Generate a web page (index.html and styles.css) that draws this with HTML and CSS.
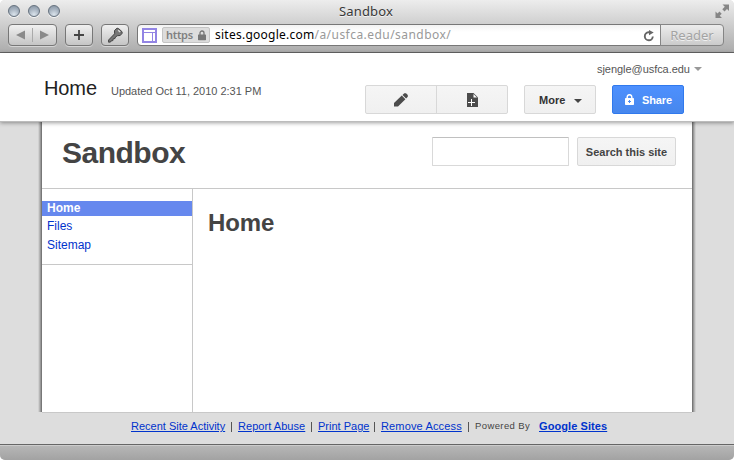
FILE: index.html
```html
<!DOCTYPE html>
<html lang="en">
<head>
<meta charset="utf-8">
<title>Sandbox</title>
<link rel="stylesheet" href="styles.css">
</head>
<body>
<div class="window">
  <div class="chrome">
    <div class="titlebar">
      <div class="lights"><i></i><i></i><i></i></div>
      <span class="title">Sandbox</span>
      <svg class="expand" width="15" height="15" viewBox="0 0 15 15"><path d="M7.500 .5h6.500v6.500l-2-2-2.500 2.500-2.200-2.200 2.500-2.500zM.500 7.500l2 2 2-2 2.200 2.200-2 2 2.300 2.300h-6.500z" fill="#858585"/></svg>
    </div>
    <div class="toolbar">
      <div class="tool nav">
        <svg width="47" height="20" viewBox="0 0 47 20"><path d="M16 5.500v9l-9-4.500zM31 5.500v9l9-4.500z" fill="#8a8a8a"/><path d="M23.500 3v14" stroke="#aaa"/></svg>
      </div>
      <div class="tool plus">
        <svg width="26" height="20" viewBox="0 0 26 20"><path d="M13 5v10M8 10h10" stroke="#444" stroke-width="1.800"/></svg>
      </div>
      <div class="tool key">
        <svg width="26" height="20" viewBox="0 0 26 20"><path d="M12.500 5.500L15 3.200l1.500.3 3.500 3.200.2 1.500-2 2.300-2.700.2-2 1.200-.5 1.600-1.800.3-.3 1.800-1.700.2-.6 1.200-2 .2V15l6-6.200z" fill="#777" stroke="#444"/><path d="M16.200 5.200l2 1.800" stroke="#ddd" stroke-width="1.300"/></svg>
      </div>
      <div class="address">
        <svg class="favicon" width="15" height="15" viewBox="0 0 15 15"><rect x="1" y="1" width="13" height="13" fill="#fff" stroke="#9284e4" stroke-width="2"/><path d="M2 4.500h11M10.500 5v8" stroke="#9284e4"/></svg>
        <span class="secure"><span class="https">https</span><svg width="8" height="11" viewBox="0 0 8 11"><path d="M2 5V3a2 2 0 0 1 4 0v2" fill="none" stroke="#777" stroke-width="1.300"/><rect y="4.500" width="8" height="5.700" rx=".6" fill="#777"/></svg></span>
        <span class="url">sites.google.com<span class="path">/a/usfca.edu/sandbox/</span></span>
        <svg class="reload" width="12" height="12" viewBox="0 0 12 12"><path d="M7 2.300H5.500a4 4 0 1 0 4.300 4.200" fill="none" stroke="#666" stroke-width="1.900"/><path d="M6 0l4.700 2.500L6 5.300z" fill="#666"/></svg>
      </div>
      <div class="reader">Reader</div>
    </div>
  </div>

  <header class="header">
    <div class="heading"><span class="page-name">Home</span><span class="updated">Updated Oct 11, 2010 2:31 PM</span></div>
    <div class="controls">
      <div class="account"><span class="email">sjengle@usfca.edu</span><i class="caret"></i></div>
      <div class="buttons">
        <div class="btn pair">
          <span class="half"><svg width="14" height="14" viewBox="0 0 14 14"><path d="M0 10L7.800 2.600l3.600 3.600L4 13.500H0zM8.500 1.900L10.300.2h1.700L13.800 2v1.700l-1.700 1.800z" fill="#4c4c4c"/></svg></span>
          <span class="half"><svg width="11" height="14" viewBox="0 0 11 14"><path d="M0 0h6.500L11 4.500V14H0z" fill="#4c4c4c"/><path d="M6.500 1v3.500H10z" fill="#fff"/><path d="M4.500 6v7M1 9.500h7" fill="none" stroke="#fff"/></svg></span>
        </div>
        <div class="btn more"><span class="more-label">More</span><i class="caret"></i></div>
        <div class="btn share"><svg width="9" height="11" viewBox="0 0 9 11"><path d="M2.200 5V3a2.300 2.300 0 0 1 4.600 0v2" fill="none" stroke="#fff" stroke-width="1.500"/><rect y="4" width="9" height="7" rx=".7" fill="#fff"/><path d="M4.500 6v3M3 7.500h3" stroke="#4a8bf5"/></svg><span class="share-label">Share</span></div>
      </div>
    </div>
  </header>

  <div class="desk">
    <div class="sheet">
      <div class="site-head">
        <h1>Sandbox</h1>
        <input class="query" type="text" aria-label="Search">
        <div class="btn search"><span>Search this site</span></div>
      </div>
      <div class="columns">
        <nav class="side">
          <a class="current">Home</a>
          <a class="files">Files</a>
          <a class="sitemap">Sitemap</a>
        </nav>
        <main><h2>Home</h2></main>
      </div>
    </div>
    <footer class="footer">
      <a class="f1">Recent Site Activity</a><b class="bar"></b><a class="f2">Report Abuse</a><b class="bar"></b><a class="f3">Print Page</a><b class="bar"></b><a class="f4">Remove Access</a><b class="bar"></b><span class="powered">Powered By</span><a class="f5">Google Sites</a>
    </footer>
  </div>
  <div class="status"></div>
</div>
</body>
</html>
```
FILE: styles.css
```css
* { box-sizing: border-box; }
html { background: #fff; }
body { margin: 0; font-family: "Liberation Sans", Arial, sans-serif; }
svg { display: block; flex: none; }
i, b { display: block; flex: none; }
span, a { white-space: nowrap; }
.window { width: 734px; height: 460px; border-radius: 5px; overflow: hidden; display: flex; flex-direction: column; background: #ddd; }

.chrome { height: 53px; flex: none; background: linear-gradient(#ededed 0, #cfcfcf 24px, #acacac 52px); border-bottom: 1px solid #666; }
.titlebar { height: 24px; display: flex; font-family: "Noto Sans", sans-serif; }
.lights { display: flex; gap: 8px; padding: 5px 0 0 8px; width: 339px; }
.lights i { width: 12px; height: 12px; border-radius: 50%; border: 1px solid #65717e; background: radial-gradient(circle at 50% 85%, #dbe4ec 0, #a6b2bf 55%, #8391a0 100%); box-shadow: 0 1px 0 #f5f5f5; }
.title { font-size: 13px; line-height: 22px; color: #383838; letter-spacing: .15px; text-shadow: 0 1px 0 #f4f4f4; }
.expand { margin: 4px 4px 0 auto; }
.toolbar { display: flex; padding-left: 8px; height: 22px; }
.tool { height: 22px; border: 1px solid #777; border-radius: 4px; background: linear-gradient(#f0f0f0, #c5c5c5); box-shadow: 0 1px 0 #d5d5d5; margin-right: 8px; }
.nav { width: 49px; }
.plus, .key { width: 28px; }
.address { width: 524px; height: 22px; display: flex; align-items: flex-start; border: 1px solid #777; border-radius: 4px 0 0 4px; background: linear-gradient(#f2f2f2, #fff 7px); padding-left: 4px; font-family: "Noto Sans", sans-serif; }
.favicon { margin-top: 3px; }
.secure { margin: 2px 5px 0 5px; width: 48px; height: 16px; border: 1px solid #c4c4c4; border-radius: 2px; background: #ddd; display: flex; align-items: center; padding-left: 3px; gap: 4px; }
.https { width: 28px; font-size: 11px; line-height: 14px; font-weight: 600; color: #808080; letter-spacing: -.3px; }
.url { font-size: 12px; line-height: 20px; color: #000; letter-spacing: .25px; }
.path { color: #999; letter-spacing: .45px; }
.reload { margin: 5px 5px 0 auto; }
.reader { width: 64px; height: 22px; margin-left: -1px; border: 1px solid #858585; border-radius: 0 4px 4px 0; background: linear-gradient(#ececec, #cbcbcb); font: 13px/20px "Noto Sans", sans-serif; color: #a3a3a3; text-align: center; text-shadow: 0 1px 0 #f0f0f0; }

.header { height: 69px; flex: none; background: #fff; border-bottom: 1px solid #bcbcbc; box-shadow: 0 1px 4px rgba(0,0,0,.38); position: relative; display: flex; justify-content: space-between; padding-left: 44px; }
.heading { display: flex; align-items: baseline; padding-top: 22px; height: 50px; }
.page-name { width: 67px; font-size: 20px; line-height: 26px; color: #222; letter-spacing: -.1px; }
.updated { font-size: 11px; color: #555; letter-spacing: -.02px; }
.controls { width: 369px; }
.account { display: flex; height: 32px; padding: 9px 0 0 232px; }
.email { width: 93px; font-size: 11px; line-height: 14px; color: #555; letter-spacing: -.05px; }
.caret { width: 0; height: 0; border: 4px solid transparent; border-top-color: #999; border-bottom: 0; }
.account .caret { margin: 5px 0 0 4px; }
.buttons { display: flex; gap: 16px; }
.btn { height: 29px; border: 1px solid #d8d8d8; border-radius: 2px; background: linear-gradient(#f5f5f5, #f0f0f0); display: flex; align-items: center; font-weight: bold; font-size: 11px; color: #333; }
.pair { width: 143px; }
.half { width: 70px; height: 27px; display: flex; align-items: center; justify-content: center; }
.half + .half { width: 71px; border-left: 1px solid #d8d8d8; }
.more { width: 72px; padding-left: 14px; }
.more-label { width: 27px; }
.more .caret { border-top-color: #444; margin: 3px 0 0 8px; }
.share { width: 72px; border-color: #3079ed; background: linear-gradient(#4d90fe, #4787ed); color: #fff; padding-left: 12px; }
.share-label { margin-left: 8px; letter-spacing: -.1px; }

.desk { flex: 1; background: #ddd; padding: 0 42px; }
.sheet { width: 650px; height: 290px; background: #fff; box-shadow: -1px 0 0 #777, -2px 0 0 #999, -3px 0 0 #b6b6b6, -4px 0 0 #d0d0d0, 1px 0 0 #777, 2px 0 0 #999, 3px 0 0 #b6b6b6, 4px 0 0 #d0d0d0, 0 1px 0 #c8c8c8; }
.site-head { height: 67px; display: flex; border-bottom: 1px solid #c8c8c8; padding: 15px 16px 0 20px; }
h1 { margin: -3px 0 0; width: 370px; font-size: 30px; line-height: 38px; color: #444; letter-spacing: -.5px; }
.query { width: 137px; height: 29px; border: 1px solid #d9d9d9; border-top-color: #c0c0c0; border-radius: 1px; background: #fff; padding: 0 6px; margin: 0; }
.search { width: 99px; margin-left: 8px; justify-content: center; color: #444; }
.columns { display: flex; height: 223px; }
.side { width: 150px; height: 76px; padding-top: 12px; border-bottom: 1px solid #c8c8c8; font-size: 12px; color: #0033cc; }
.side a { display: block; padding-left: 5px; line-height: 15px; }
.side .current { background: #6688ee; color: #fff; font-weight: bold; }
.side .files { margin-top: 3px; }
.side .sitemap { margin-top: 4px; }
main { flex: 1; height: 223px; border-left: 1px solid #c8c8c8; padding: 19px 0 0 15px; }
h2 { margin: 0; font-size: 24px; line-height: 30px; color: #444; letter-spacing: -.1px; }
.footer { display: flex; padding: 7px 0 0 89px; height: 32px; font-size: 11px; line-height: 14px; color: #444; }
.footer a { color: #0033cc; text-decoration: underline; }
.footer .bar { width: 1px; height: 10px; margin: 3px 6px 0 6px; background: #555; }
.f1 { width: 94px; } .f2 { width: 67px; letter-spacing: .05px; } .f3 { width: 50px; } .f4 { width: 81px; letter-spacing: .15px; }
.powered { font-size: 9.5px; width: 64px; letter-spacing: .4px; }
.f5 { font-weight: bold; letter-spacing: .08px; }
.status { height: 16px; flex: none; border-top: 1px solid #666; background: linear-gradient(#b8b8b8, #a2a2a2); box-shadow: inset 0 1px 0 #ccc; height: 16px; }
```
